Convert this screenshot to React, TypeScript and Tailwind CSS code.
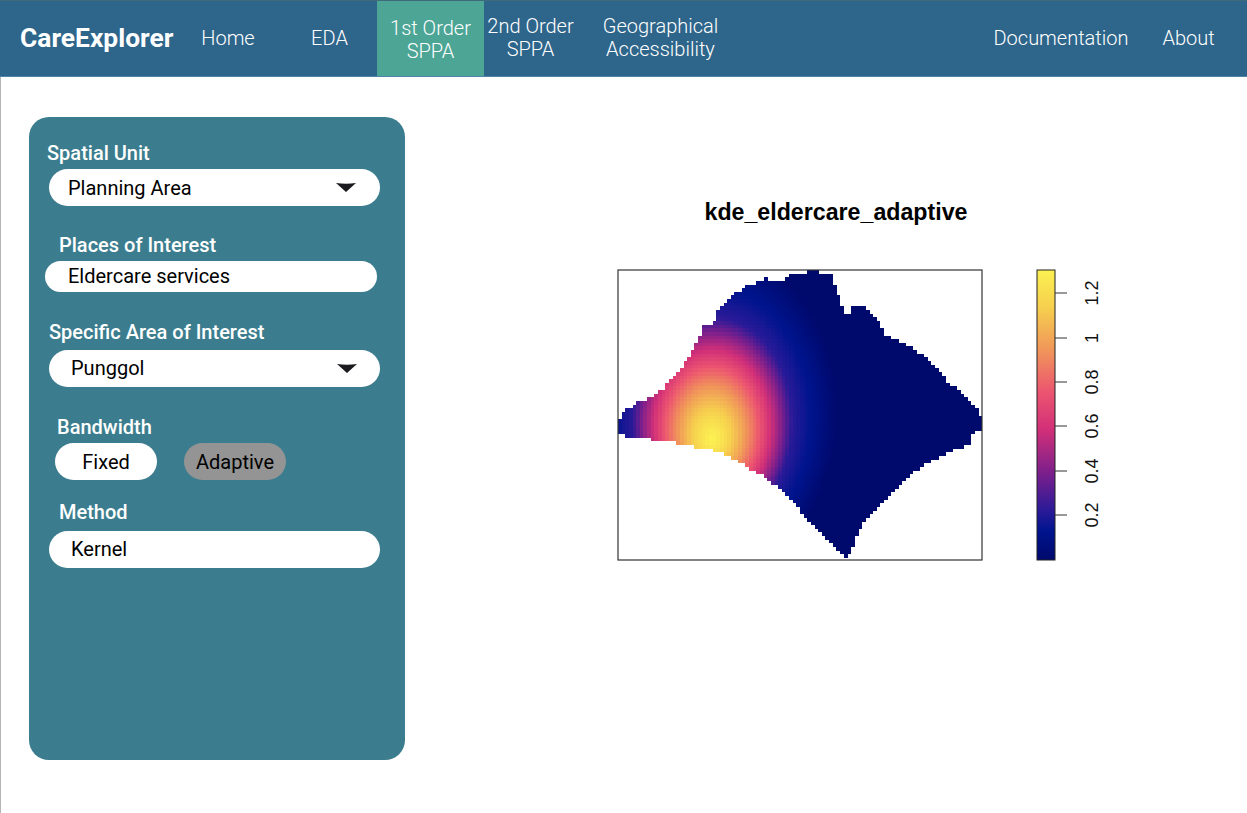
import { useMemo } from 'react';

// map outline, in plot pixels (origin at the plot box's top left corner)
const OUTLINE: [number, number][] = [
  [0, 155], [4, 145], [11, 138], [21, 131], [33, 128], [44, 120], [58, 105], [71, 88], [79, 73], [86, 55],
  [96, 53], [101, 39], [116, 25], [131, 15], [146, 9], [168, 10], [173, 5], [193, 1], [213, 3], [218, 18],
  [225, 42], [231, 44], [236, 35], [245, 36], [261, 53], [266, 65], [284, 72], [308, 88], [333, 115], [359, 138],
  [364, 148], [364, 157], [354, 165], [354, 173], [333, 181], [308, 193], [280, 215], [257, 241], [243, 255], [237, 271],
  [229, 288], [225, 286], [210, 271], [190, 250], [165, 220], [140, 203], [116, 188], [90, 179], [64, 174], [51, 172],
  [33, 169], [12, 166], [0, 165],
];

const STOPS: [number, string][] = [
  [0, '#00096c'], [0.1, '#00148e'], [0.17, '#2a1a98'], [0.3, '#7c1f8c'], [0.45, '#d23078'], [0.58, '#ec5570'],
  [0.72, '#f0945a'], [0.87, '#f6cf4e'], [1, '#fcf152'],
];

const TICKS = [
  { label: '1.2', y: 293 },
  { label: '1', y: 338 },
  { label: '0.8', y: 382 },
  { label: '0.6', y: 426 },
  { label: '0.4', y: 471 },
  { label: '0.2', y: 515 },
];

function inside(x: number, y: number) {
  let hit = false;
  for (let i = 0, j = OUTLINE.length - 1; i < OUTLINE.length; j = i++) {
    const [xi, yi] = OUTLINE[i];
    const [xj, yj] = OUTLINE[j];
    if (yi > y !== yj > y && x < ((xj - xi) * (y - yi)) / (yj - yi) + xi) hit = !hit;
  }
  return hit;
}

function hex(c: string) {
  return [1, 3, 5].map(i => parseInt(c.slice(i, i + 2), 16));
}

function ramp(t: number) {
  const v = Math.min(1, Math.max(0, t));
  for (let i = 1; i < STOPS.length; i++) {
    if (v <= STOPS[i][0]) {
      const [p0, c0] = STOPS[i - 1];
      const [p1, c1] = STOPS[i];
      const k = (v - p0) / (p1 - p0);
      const a = hex(c0);
      const b = hex(c1);
      return `rgb(${a.map((n, n2) => Math.round(n + (b[n2] - n) * k)).join(',')})`;
    }
  }
  return STOPS[STOPS.length - 1][1];
}

// nested ellipses around the peak, drifting upward as they widen
function density(x: number, y: number) {
  const A = (x - 94) / 80;
  const B = (y - 170) / 105;
  const k = 18 / 105;
  const q = A * A + B * B;
  if (q === 0) return 1;
  const u = (-2 * B * k + Math.sqrt(4 * B * B * k * k + 4 * q * (1 - k * k))) / (2 * q);
  const s = 1 / u;
  if (s > 1) return Math.max(0, 0.17 - (s - 1) * 0.3);
  return 0.17 + (1 - Math.pow(s, 1.3)) * 0.83;
}

function Density() {
  const cells = useMemo(() => {
    const out: { x: number; y: number; fill: string }[] = [];
    const size = 3.64;
    for (let row = 0; row < 80; row++) {
      for (let col = 0; col < 100; col++) {
        const x = col * size;
        const y = row * size;
        if (inside(x + size / 2, y + size / 2)) {
          out.push({ x, y, fill: ramp(density(x + size / 2, y + size / 2)) });
        }
      }
    }
    return out;
  }, []);

  return (
    <g transform="translate(8 8)">
      <g shapeRendering="crispEdges">
        {cells.map(c => (
          <rect key={`${c.x}-${c.y}`} x={c.x} y={c.y} width={4} height={4} fill={c.fill} />
        ))}
      </g>
      <rect x={0} y={0} width={364} height={290} fill="none" stroke="#333" strokeWidth={1.2} />
    </g>
  );
}

function Plot() {
  return (
    <svg width={500} height={310} className="block">
      <defs>
        <linearGradient id="bar" x1="0" y1="1" x2="0" y2="0">
          {STOPS.map(([p, c]) => (
            <stop key={p} offset={p} stopColor={c} />
          ))}
        </linearGradient>
      </defs>
      <Density />
      <rect x={427} y={8} width={18} height={290} fill="url(#bar)" stroke="#222" strokeWidth={1} />
      {TICKS.map(t => (
        <g key={t.label}>
          <line x1={445} x2={457} y1={t.y - 262} y2={t.y - 262} stroke="#333" strokeWidth={1} />
          <text
            transform={`translate(488 ${t.y - 262}) rotate(-90)`}
            textAnchor="middle"
            fontSize={18}
            fontFamily="'Liberation Sans', sans-serif"
            fill="#111"
          >
            {t.label}
          </text>
        </g>
      ))}
    </svg>
  );
}

function Caret() {
  return (
    <svg width={20} height={9} viewBox="0 0 20 9" className="shrink-0">
      <path d="M0 0 Q10 1.5 20 0 L10 9 Z" fill="#1a1a1f" />
    </svg>
  );
}

export default function App() {
  return (
    <div className="h-[813px] w-[1247px] overflow-hidden bg-white font-['Roboto',sans-serif]">
      {/* Navbar */}
      <nav className="flex h-[77px] items-stretch border-t border-b border-t-[#3f6a7c] border-b-[#4f86a8] bg-[#2e658a] text-[20px] leading-[23px] font-light text-white">
        <div className="ml-5 flex w-[181px] items-center text-[26.4px] font-bold">CareExplorer</div>
        <a className="flex w-[54px] items-center justify-center">Home</a>
        <a className="ml-14 flex w-[37px] items-center justify-center">EDA</a>
        <a className="ml-[29px] flex w-[107px] items-center justify-center bg-[#4ca595] pt-0.5 text-center">
          1st Order
          <br />
          SPPA
        </a>
        <a className="ml-[3px] flex w-[87px] items-center justify-center pb-[1px] text-center">
          2nd Order
          <br />
          SPPA
        </a>
        <a className="ml-7 flex w-[117px] items-center justify-center pb-[1px] text-center">
          Geographical
          <br />
          Accessibility
        </a>
        <a className="ml-auto flex w-[136px] items-center justify-center">Documentation</a>
        <a className="ml-[33px] mr-8 flex w-[53px] items-center justify-center">About</a>
      </nav>

      <div className="flex h-[736px] border-l border-[#b5b5b5]">
        {/* Sidebar */}
        <aside className="ml-7 mt-10 h-[643px] w-[376px] rounded-[20px] bg-[#3b7d8e] text-[20px] leading-[22px] text-black">
          <div className="ml-[18px] mt-[25px] font-medium text-white">Spatial Unit</div>
          <div className="ml-5 mt-[5px] flex h-[37px] w-[331px] items-center justify-between rounded-full bg-white pl-[19px] pr-[24px]">
            Planning Area
            <Caret />
          </div>

          <div className="ml-[30px] mt-[28px] font-medium text-white">Places of Interest</div>
          <div className="ml-4 mt-[5px] flex h-[31px] w-[332px] items-center rounded-full bg-white pb-[1px] pl-[23px]">
            Eldercare services
          </div>

          <div className="ml-5 mt-[29px] font-medium text-white">Specific Area of Interest</div>
          <div className="ml-5 mt-[7px] flex h-[37px] w-[331px] items-center justify-between rounded-full bg-white pb-[1px] pl-[22px] pr-[23px]">
            Punggol
            <Caret />
          </div>

          <div className="ml-7 mt-[29px] font-medium text-white">Bandwidth</div>
          <div className="ml-[26px] mt-[5px] flex gap-[27px]">
            <div className="flex h-[37px] w-[102px] items-center justify-center rounded-full bg-white">Fixed</div>
            <div className="flex h-[37px] w-[102px] items-center justify-center rounded-full bg-[#949494]">Adaptive</div>
          </div>

          <div className="ml-[30px] mt-[21px] font-medium text-white">Method</div>
          <div className="ml-5 mt-[8px] flex h-[37px] w-[331px] items-center rounded-full bg-white pb-[1px] pl-[22px]">
            Kernel
          </div>
        </aside>

        {/* Plot */}
        <main className="ml-[205px] mt-[122px]">
          <h2 className="w-[452px] text-center font-['Liberation_Sans',sans-serif] text-[23.2px] leading-[26px] font-bold text-black">
            kde_eldercare_adaptive
          </h2>
          <div className="mt-[37px]">
            <Plot />
          </div>
        </main>
      </div>
    </div>
  );
}
